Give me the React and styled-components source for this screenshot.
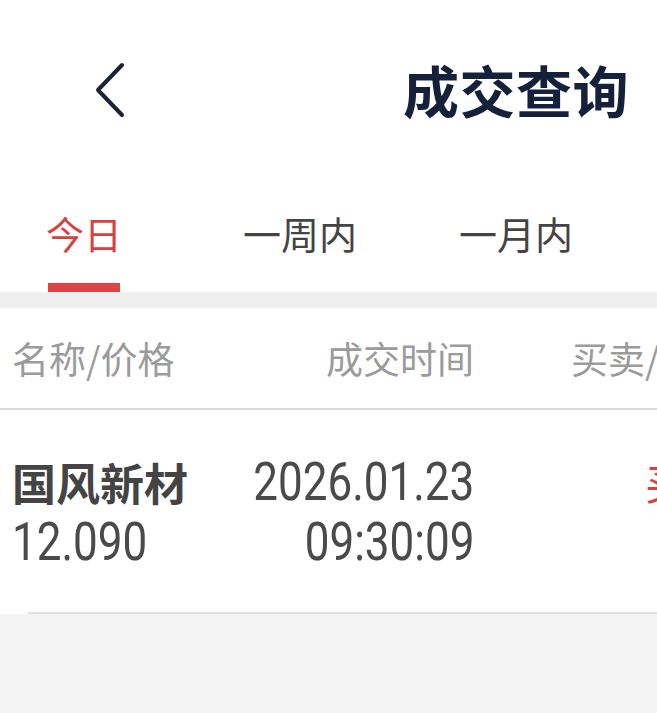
import styled, { createGlobalStyle } from "styled-components";

const GlobalStyle = createGlobalStyle`
  html, body {
    margin: 0;
    padding: 0;
    background: #f3f3f3;
  }
  body {
    font-family: "Noto Sans CJK SC", "Noto Sans", sans-serif;
  }
`;

const tabs = ["今日", "一周内", "一月内"];

const App = () => {
  return (
    <Page>
      <GlobalStyle />
      <Header>
        <BackButton>
          <svg width="34" height="58" viewBox="0 0 34 58">
            <polyline
              points="28,4 4,29 28,54"
              fill="none"
              stroke="#1b2235"
              strokeWidth="4"
              strokeLinecap="round"
              strokeLinejoin="round"
            />
          </svg>
        </BackButton>
        <Title>成交查询</Title>
      </Header>

      <TabBar>
        {tabs.map((t, i) => (
          <Tab key={t}>
            <TabLabel active={i === 0}>{t}</TabLabel>
            <Indicator active={i === 0} />
          </Tab>
        ))}
      </TabBar>

      <Gap />

      <Table>
        <HeadRow>
          <HeadCell>名称/价格</HeadCell>
          <HeadCell align="right">成交时间</HeadCell>
          <HeadCell>买卖/成交量</HeadCell>
        </HeadRow>
        <DataRow>
          <Cell>
            <Name>国风新材</Name>
            <Num>12.090</Num>
          </Cell>
          <Cell align="right">
            <Num align="right">2026.01.23</Num>
            <Num align="right">09:30:09</Num>
          </Cell>
          <Cell>
            <Side>买入</Side>
          </Cell>
        </DataRow>
      </Table>
    </Page>
  );
};

const Page = styled.div`
  width: 657px;
  overflow: hidden;
`;

const Header = styled.header`
  height: 186px;
  background: #fff;
  display: flex;
  align-items: center;
  justify-content: space-between;
  padding: 0 28px 0 94px;
  box-sizing: border-box;
`;

const BackButton = styled.div`
  display: flex;
  margin-top: -6px;
`;

const Title = styled.h1`
  margin: -10px 0 0;
  font-size: 56px;
  font-weight: 700;
  color: #15203a;
  letter-spacing: 0.5px;
`;

const TabBar = styled.nav`
  display: flex;
  background: #fff;
  height: 106px;
  margin-left: -24px;
`;

const Tab = styled.div`
  flex: 0 0 216px;
  display: flex;
  flex-direction: column;
  align-items: center;
  justify-content: flex-end;
`;

const TabLabel = styled.span`
  font-size: 38px;
  line-height: 38px;
  color: ${(p) => (p.active ? "#d6433f" : "#444")};
`;

const Indicator = styled.div`
  width: 72px;
  height: 9px;
  margin-top: 31px;
  background: ${(p) => (p.active ? "#e04343" : "transparent")};
`;

const Gap = styled.div`
  height: 16px;
  background: #efefef;
`;

const Table = styled.section`
  background: #fff;
`;

const Columns = styled.div`
  display: grid;
  grid-template-columns: 230px 232px 300px;
  padding-left: 12px;
  width: max-content;

  & > :nth-child(3) {
    padding-left: 97px;
  }
`;

const HeadRow = styled(Columns)`
  height: 100px;
  align-items: center;
  border-bottom: 2px solid #d9d9d9;
`;

const HeadCell = styled.div`
  font-size: 37px;
  color: #9b9b9b;
  white-space: nowrap;
  text-align: ${(p) => p.align || "left"};
`;

const DataRow = styled(Columns)`
  height: 204px;
  align-content: center;
  position: relative;
  &::after {
    content: "";
    position: absolute;
    left: 28px;
    right: 0;
    bottom: 0;
    height: 2px;
    background: #e2e2e2;
  }
`;

const Cell = styled.div`
  display: flex;
  flex-direction: column;
  align-items: ${(p) => (p.align === "right" ? "flex-end" : "flex-start")};
  align-self: start;
`;

const Name = styled.div`
  font-size: 44px;
  line-height: 60px;
  font-weight: 700;
  color: #444;
`;

const Num = styled.div`
  font-family: Roboto, "Liberation Sans", sans-serif;
  font-size: 53px;
  line-height: 60px;
  color: #4a4a4a;
  white-space: nowrap;
  transform: scaleX(0.83);
  transform-origin: ${(p) => (p.align === "right" ? "right" : "left")} center;
`;

const Side = styled.div`
  font-size: 42px;
  line-height: 60px;
  color: #d6433f;
  padding-left: 74px;
`;

export default App;
